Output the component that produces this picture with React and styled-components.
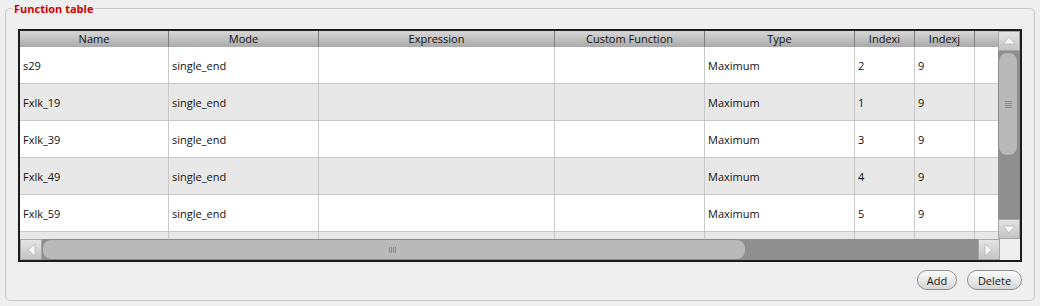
import React from 'react';
import styled, { createGlobalStyle } from 'styled-components';

const GlobalStyle = createGlobalStyle`
  body {
    margin: 0;
    background: #efefef;
    font-family: "Open Sans", "DejaVu Sans", sans-serif;
  }
`;

const columns = [
  { key: 'name', title: 'Name', width: 149 },
  { key: 'mode', title: 'Mode', width: 150 },
  { key: 'expr', title: 'Expression', width: 236 },
  { key: 'custom', title: 'Custom Function', width: 150 },
  { key: 'type', title: 'Type', width: 150 },
  { key: 'i', title: 'Indexi', width: 60 },
  { key: 'j', title: 'Indexj', width: 60 },
  { key: 'extra', title: '', width: 25 },
];

const rows = [
  { name: 's29', mode: 'single_end', type: 'Maximum', i: '2', j: '9' },
  { name: 'Fxlk_19', mode: 'single_end', type: 'Maximum', i: '1', j: '9' },
  { name: 'Fxlk_39', mode: 'single_end', type: 'Maximum', i: '3', j: '9' },
  { name: 'Fxlk_49', mode: 'single_end', type: 'Maximum', i: '4', j: '9' },
  { name: 'Fxlk_59', mode: 'single_end', type: 'Maximum', i: '5', j: '9' },
  { name: '', mode: '', type: '', i: '', j: '' },
];

const Fieldset = styled.fieldset`
  margin: 0 5px;
  padding: 0 12px 10px 12px;
  border: 1px solid #c6c6c6;
  border-radius: 5px;
  min-width: 0;
`;

const Legend = styled.legend`
  margin-left: -6px;
  padding: 0 2px;
  font-size: 11px;
  line-height: 17px;
  font-weight: bold;
  color: #d40000;
`;

const Frame = styled.div`
  margin-top: 12px;
  border: 2px solid #1c1c1c;
  background: #efefef;
  display: flex;
  flex-direction: column;
`;

const Upper = styled.div`
  display: flex;
`;

const Viewport = styled.div`
  flex: 1;
  overflow: hidden;
  background: #fff;
`;

const HeaderRow = styled.div`
  display: flex;
  height: 16px;
  background: linear-gradient(#d8d8d8, #a9a9a9);
`;

const HeaderCell = styled.div`
  flex: 0 0 ${p => p.$w}px;
  box-sizing: border-box;
  border-right: 1px solid #7e7e7e;
  font-size: 11px;
  line-height: 16px;
  color: #111;
  text-align: center;
  white-space: nowrap;
  overflow: hidden;
`;

const Body = styled.div`
  height: 192px;
  overflow: hidden;
`;

const Row = styled.div`
  display: flex;
  height: 37px;
  background: ${p => (p.$alt ? '#e8e8e8' : '#ffffff')};
`;

const Cell = styled.div`
  flex: 0 0 ${p => p.$w}px;
  box-sizing: border-box;
  border-right: 1px solid #c9c9c9;
  border-bottom: 1px solid #c9c9c9;
  padding-left: 3px;
  display: flex;
  align-items: center;
  font-size: 11px;
  color: #111;
  white-space: nowrap;
  overflow: hidden;
`;

const VScroll = styled.div`
  flex: 0 0 20px;
  display: flex;
  flex-direction: column;
  height: 208px;
`;

const Track = styled.div`
  flex: 1;
  background: #8f8f8f;
  display: flex;
  flex-direction: ${p => (p.$vertical ? 'column' : 'row')};
  padding: ${p => (p.$vertical ? '1px 0 0 0' : '0')};
`;

const Thumb = styled.div`
  box-sizing: border-box;
  ${p => (p.$vertical ? 'height: 104px; width: 20px;' : 'width: 704px; height: 21px;')}
  background: #b9b9b9;
  border: 1px solid #8a8a8a;
  border-radius: 9px;
  display: flex;
  align-items: center;
  justify-content: ${p => (p.$vertical ? 'center' : 'flex-start')};
  padding-left: ${p => (p.$vertical ? '0' : '346px')};
`;

const Grip = styled.div`
  width: ${p => (p.$vertical ? '7px' : '8px')};
  height: ${p => (p.$vertical ? '7px' : '6px')};
  background: ${p =>
    p.$vertical
      ? 'repeating-linear-gradient(#8a8a8a 0 1px, transparent 1px 2px)'
      : 'repeating-linear-gradient(90deg, #8a8a8a 0 1px, transparent 1px 2px)'};
`;

const ArrowBtn = styled.div`
  box-sizing: border-box;
  flex: 0 0 20px;
  ${p => (p.$vertical ? 'height: 20px;' : 'height: 21px;')}
  background: linear-gradient(#e4e4e4, #c4c4c4);
  border: 1px solid #a7a7a7;
  display: flex;
  align-items: center;
  justify-content: center;
`;

const HScroll = styled.div`
  display: flex;
  height: 21px;
`;

const HTrackWrap = styled.div`
  flex: 1;
  display: flex;
`;

const Corner = styled.div`
  flex: 0 0 20px;
  background: #efefef;
`;

const ButtonRow = styled.div`
  display: flex;
  justify-content: flex-end;
  gap: 10px;
  margin-top: 8px;
`;

const Button = styled.button`
  box-sizing: border-box;
  height: 20px;
  width: ${p => p.$w}px;
  padding: 0;
  border: 1px solid #8e8e8e;
  border-radius: 10px;
  background: linear-gradient(#fdfdfd, #d6d6d6);
  font-family: "Open Sans", "DejaVu Sans", sans-serif;
  font-size: 11px;
  color: #1a1a1a;
`;

const arrowPoints = {
  up: '4,12 10,5 16,12',
  down: '4,6 10,13 16,6',
  left: '14,3 7,9 14,15',
  right: '6,3 13,9 6,15',
};

function Arrow({ dir }) {
  return (
    <svg width="20" height="18" viewBox="0 0 20 18">
      <polygon points={arrowPoints[dir]} fill="#f7f7f7" stroke="#b0b0b0" strokeWidth="0.7" />
    </svg>
  );
}

export default function App() {
  return (
    <>
      <GlobalStyle />
      <Fieldset>
        <Legend>Function table</Legend>
        <Frame>
          <Upper>
            <Viewport>
              <HeaderRow>
                {columns.map(c => (
                  <HeaderCell key={c.key} $w={c.width}>{c.title}</HeaderCell>
                ))}
              </HeaderRow>
              <Body>
                {rows.map((r, i) => (
                  <Row key={i} $alt={i % 2 === 1}>
                    {columns.map(c => (
                      <Cell key={c.key} $w={c.width}>{r[c.key] || ''}</Cell>
                    ))}
                  </Row>
                ))}
              </Body>
            </Viewport>
            <VScroll>
              <ArrowBtn $vertical><Arrow dir="up" /></ArrowBtn>
              <Track $vertical>
                <Thumb $vertical><Grip $vertical /></Thumb>
              </Track>
              <ArrowBtn $vertical><Arrow dir="down" /></ArrowBtn>
            </VScroll>
          </Upper>
          <HScroll>
            <HTrackWrap>
              <ArrowBtn><Arrow dir="left" /></ArrowBtn>
              <Track>
                <Thumb><Grip /></Thumb>
              </Track>
              <ArrowBtn><Arrow dir="right" /></ArrowBtn>
            </HTrackWrap>
            <Corner />
          </HScroll>
        </Frame>
        <ButtonRow>
          <Button $w={40}>Add</Button>
          <Button $w={55}>Delete</Button>
        </ButtonRow>
      </Fieldset>
    </>
  );
}
